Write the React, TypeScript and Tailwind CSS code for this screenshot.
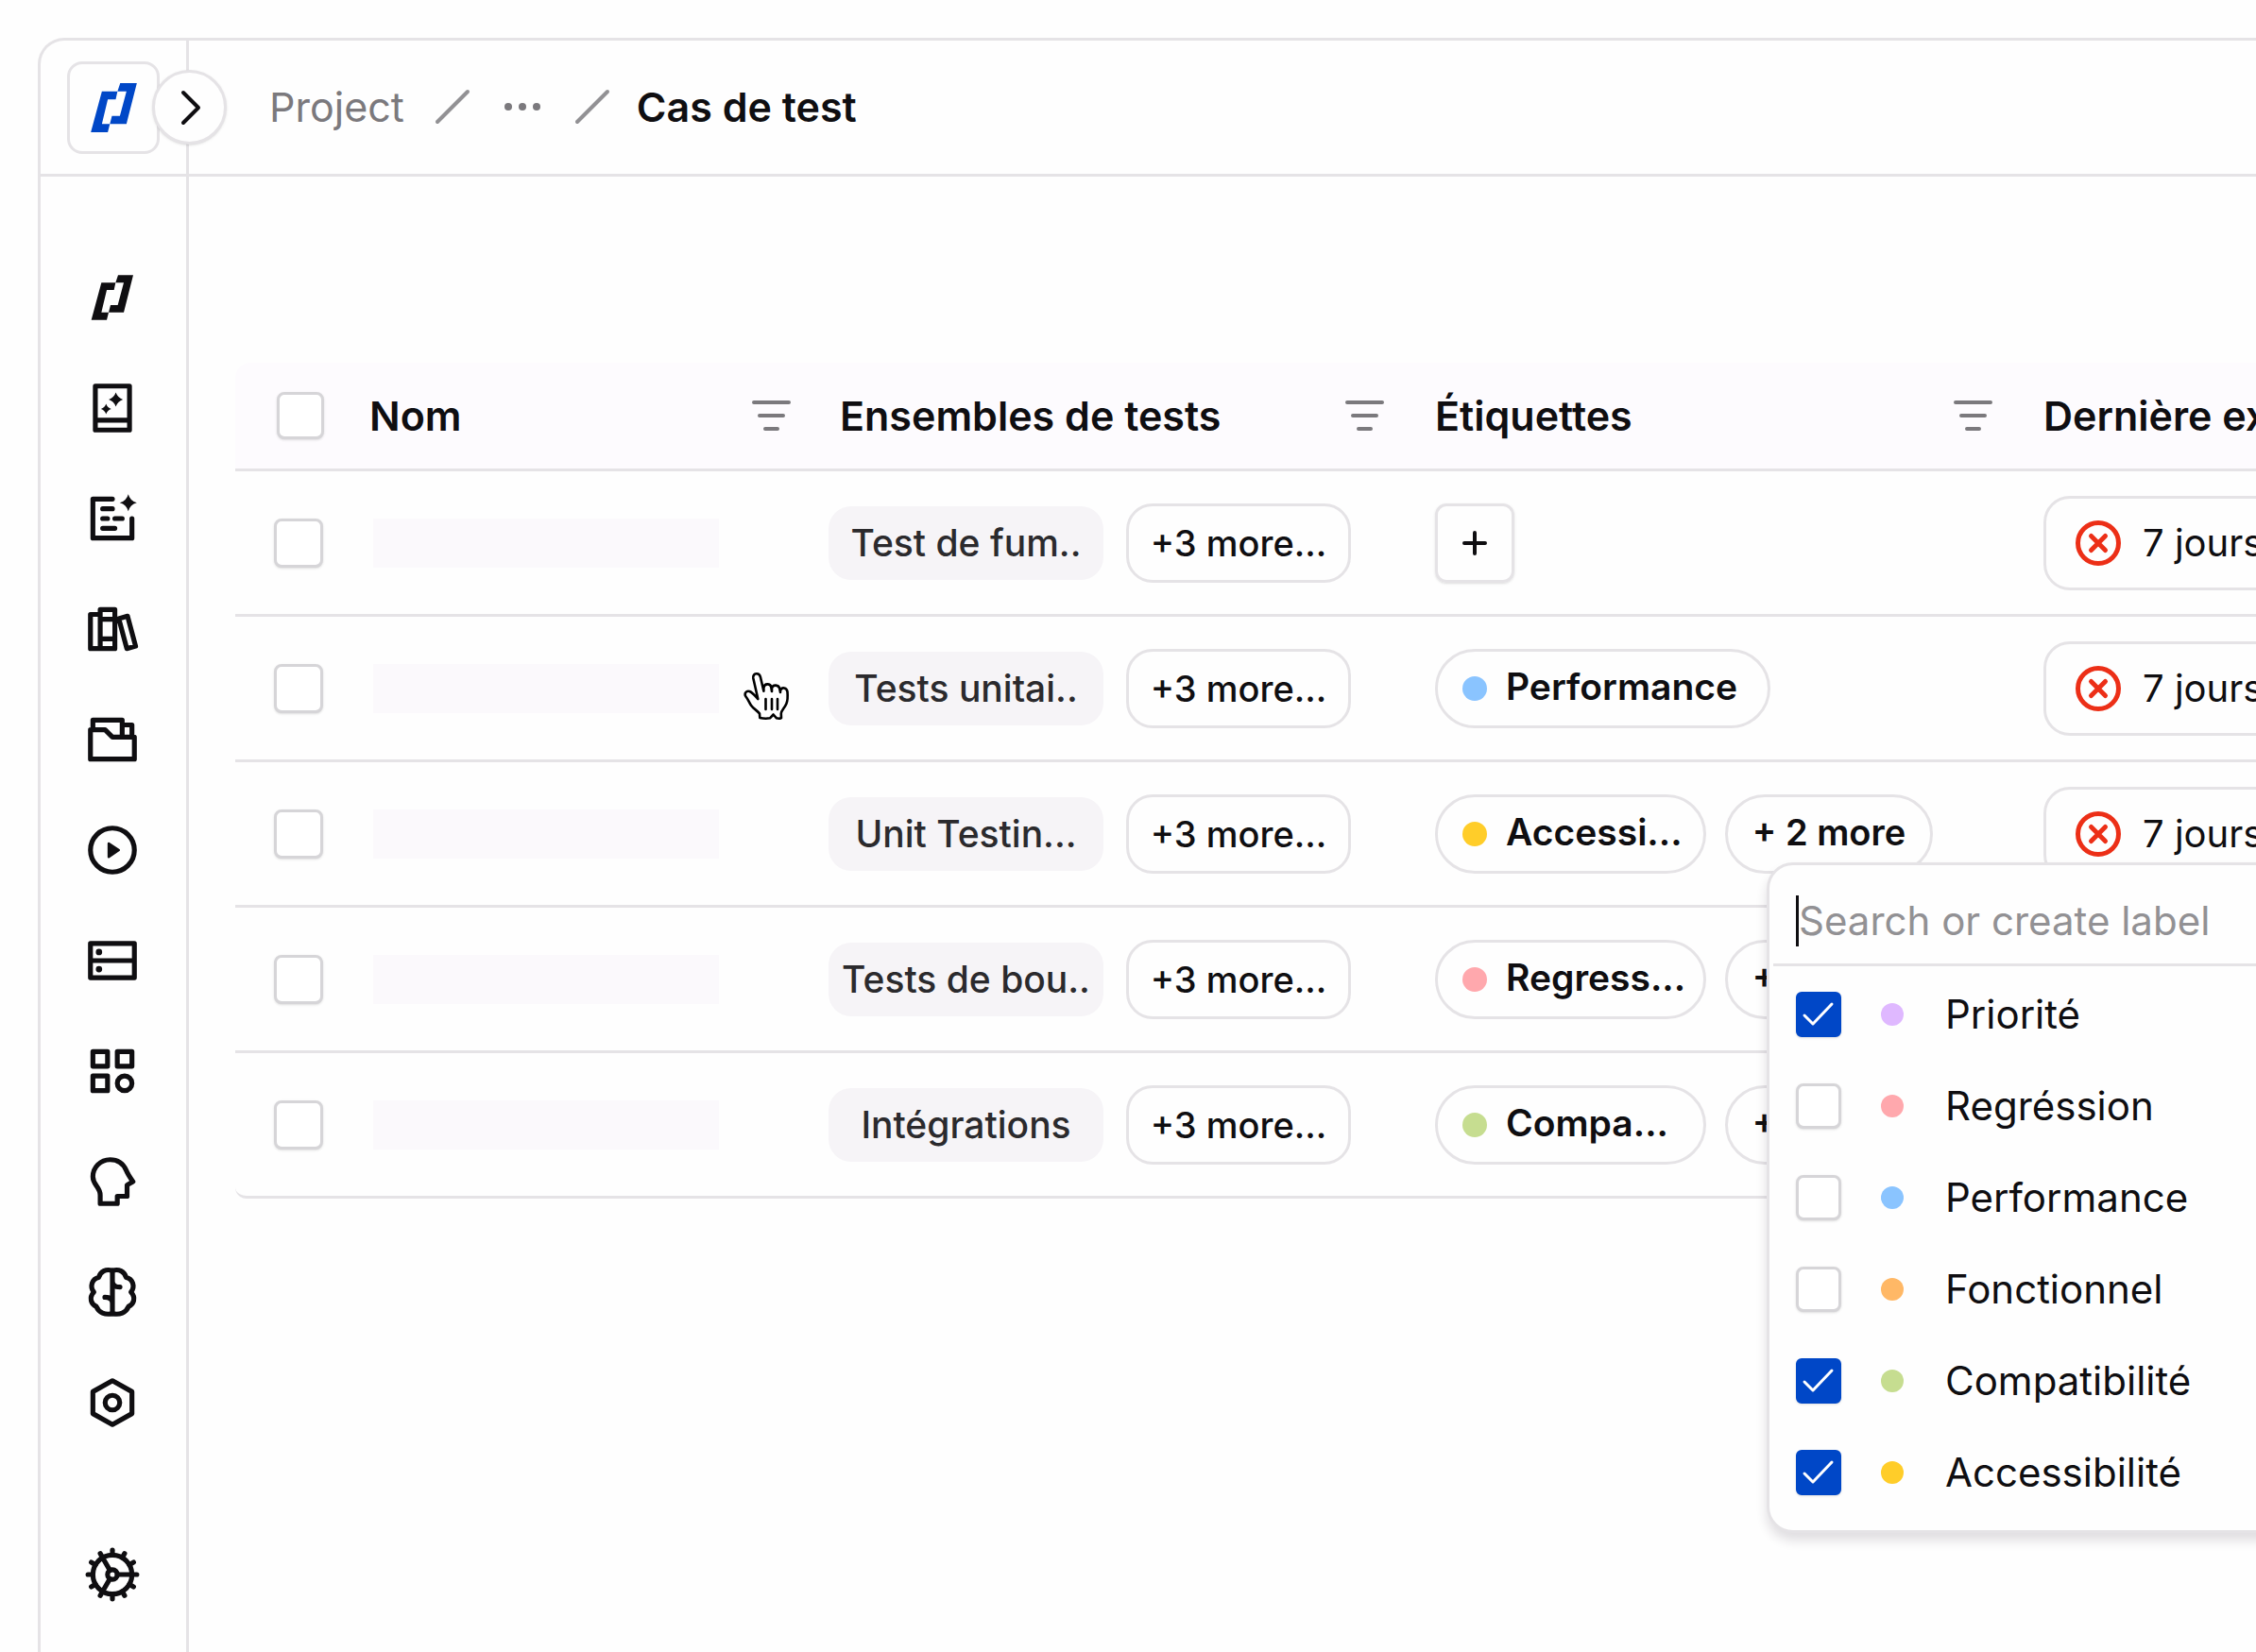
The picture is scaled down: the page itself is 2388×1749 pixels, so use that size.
import type { ReactNode } from "react";
import clsx from "clsx";

type Tag = { name: string; dot: string };

const tests: { set: string; tag?: Tag; more?: boolean; menu?: boolean; cursor?: boolean }[] = [
    { set: "Test de fum.." },
    { set: "Tests unitai..", tag: { name: "Performance", dot: "bg-[#8ac4ff]" }, cursor: true },
    { set: "Unit Testin...", tag: { name: "Accessi...", dot: "bg-[#ffcd29]" }, more: true, menu: true },
    { set: "Tests de bou..", tag: { name: "Regress...", dot: "bg-[#ffa8ad]" }, more: true },
    { set: "Intégrations", tag: { name: "Compa...", dot: "bg-[#c6dd90]" }, more: true },
];

const labels = [
    { name: "Priorité", dot: "bg-[#dfb8ff]", checked: true },
    { name: "Regréssion", dot: "bg-[#ffa8ad]", checked: false },
    { name: "Performance", dot: "bg-[#8ac4ff]", checked: false },
    { name: "Fonctionnel", dot: "bg-[#ffb866]", checked: false },
    { name: "Compatibilité", dot: "bg-[#c6dd90]", checked: true },
    { name: "Accessibilité", dot: "bg-[#ffcd29]", checked: true },
];

function BrandShape() {
    return (
        <g fill="currentColor">
            <path d="M145 122H190L185 145H162L145 216H168L162 240H113Z" />
            <path d="M198 98H246L216 216H168L174 193H197L216 122H190Z" />
        </g>
    );
}

function NavIcon({ children }: { children: ReactNode }) {
    return (
        <svg
            viewBox="0 0 24 24"
            className="size-[62px]"
            fill="none"
            stroke="currentColor"
            strokeWidth="2"
            strokeLinecap="round"
            strokeLinejoin="round"
            aria-hidden="true"
        >
            {children}
        </svg>
    );
}

const teeth = [0, 30, 60, 90, 120, 150, 180, 210, 240, 270, 300, 330];

const nav: { label: string; icon: ReactNode }[] = [
    {
        label: "Accueil",
        icon: (
            <svg viewBox="87 76 186 186" className="size-[62px]" aria-hidden="true">
                <BrandShape />
            </svg>
        ),
    },
    {
        label: "Cahier",
        icon: (
            <NavIcon>
                <path d="M5 3h14v18H5zM5 17h14" />
                <g fill="currentColor" stroke="none">
                    <path d="M13.4 5.6Q14.2 7.8 16.3 8.5Q14.2 9.2 13.4 11.4Q12.6 9.2 10.5 8.5Q12.6 7.8 13.4 5.6Z" />
                    <path d="M9.4 10.3Q10 11.9 11.5 12.4Q10 12.9 9.4 14.5Q8.8 12.9 7.3 12.4Q8.8 11.9 9.4 10.3Z" />
                </g>
            </NavIcon>
        ),
    },
    {
        label: "Exigences",
        icon: (
            <NavIcon>
                <path d="M12 4H4v16h16v-8M8 8h4M8 12h2M13 12h3M8 16h5" />
                <path
                    d="M18.5 2Q19.2 4.7 22 5.5Q19.2 6.3 18.5 9Q17.8 6.3 15 5.5Q17.8 4.7 18.5 2Z"
                    fill="currentColor"
                    stroke="none"
                />
            </NavIcon>
        ),
    },
    {
        label: "Bibliothèque",
        icon: (
            <NavIcon>
                <path d="M7 6H3v14h4M7 4h6v16H7zM7 8h6M7 16h6M14.6 7.7l3.6-1L21.5 19l-3.6 1z" />
            </NavIcon>
        ),
    },
    {
        label: "Dossiers",
        icon: (
            <NavIcon>
                <path d="M3 8h6l3 3h9v9H3zM4 8V4h12v7M16 6h4v5" />
            </NavIcon>
        ),
    },
    {
        label: "Exécutions",
        icon: (
            <NavIcon>
                <circle cx="12" cy="12" r="9" />
                <path d="M10.5 9.3L14.6 12L10.5 14.8Z" fill="currentColor" strokeWidth="1" />
            </NavIcon>
        ),
    },
    {
        label: "Environnements",
        icon: (
            <NavIcon>
                <path d="M3 5h18v14H3zM3 12h18" />
                <g fill="currentColor" stroke="none">
                    <circle cx="6.5" cy="8.5" r="1.3" />
                    <circle cx="6.5" cy="15.5" r="1.3" />
                </g>
            </NavIcon>
        ),
    },
    {
        label: "Modules",
        icon: (
            <NavIcon>
                <path d="M4 4h6v6H4zM14 4h6v6h-6zM4 14h6v6H4z" />
                <circle cx="17" cy="17" r="3" />
            </NavIcon>
        ),
    },
    {
        label: "Agents",
        icon: (
            <NavIcon>
                <path d="M7 21v-3.5c0-1.6-.8-2.7-1.5-3.7C4.6 12.6 4 11.5 4 10a7 7 0 0 1 7-7c3.1 0 5.5 1.7 6.6 4.3.6 1.5 1.5 2.9 2.8 4.7L18 13.4V18h-4v3z" />
            </NavIcon>
        ),
    },
    {
        label: "Intelligence",
        icon: (
            <NavIcon>
                <path d="M12 3.2V20.8M12 7.5c0 1.6 1 2.4 3.1 2.4M12 16.5c0-1.6-1-2.4-3.1-2.4" />
                <path d="M12 3.2C9.4 2.3 7 3.5 6.4 6C3.6 6.5 2.6 9.8 4.4 12C2.3 14.2 3.2 17 5.4 17.9C6.4 20.4 9 21.5 12 20.8" />
                <path d="M12 3.2C14.6 2.3 17 3.5 17.6 6C20.4 6.5 21.4 9.8 19.6 12C21.7 14.2 20.8 17 18.6 17.9C17.6 20.4 15 21.5 12 20.8" />
            </NavIcon>
        ),
    },
    {
        label: "Configuration",
        icon: (
            <NavIcon>
                <path d="M12 3l8 4.5v9L12 21l-8-4.5v-9z" />
                <circle cx="12" cy="12" r="3" />
            </NavIcon>
        ),
    },
];

function Checkbox({ id, label, checked = false, size = "size-[52px]" }: { id: string; label?: string; checked?: boolean; size?: string }) {
    return (
        <span className="inline-grid place-items-center align-middle">
            <input
                id={id}
                type="checkbox"
                defaultChecked={checked}
                aria-label={label}
                className={clsx(
                    "peer col-start-1 row-start-1 appearance-none rounded-lg border-3 border-[#d6d5d8] bg-white shadow-sm",
                    "checked:rounded-md checked:border-[#0047c7] checked:bg-[#0047c7]",
                    size
                )}
            />
            <svg
                viewBox="0 0 48 48"
                className="pointer-events-none invisible col-start-1 row-start-1 size-12 text-white peer-checked:visible"
                fill="none"
                stroke="currentColor"
                strokeWidth="3"
                strokeLinecap="round"
                strokeLinejoin="round"
                aria-hidden="true"
            >
                <path d="M9 25l9 9 20-21" />
            </svg>
        </span>
    );
}

function FilterButton({ label }: { label: string }) {
    return (
        <button type="button" aria-label={label} className="text-[#7b797d]">
            <svg viewBox="0 0 41 34" className="h-[34px] w-[41px]" fill="none" stroke="currentColor" strokeWidth="4" strokeLinecap="round" aria-hidden="true">
                <path d="M2 3h37M8 17h25M14 31h13" />
            </svg>
        </button>
    );
}

function HeadCell({ title, className }: { title: string; className: string }) {
    return (
        <th scope="col" className="border-b-3 border-[#e5e3e6] bg-[#fdfbfe] p-0 text-left">
            <div className={clsx("flex items-center justify-between", className)}>
                <span className="text-[43px] leading-[52px] font-semibold">{title}</span>
                <FilterButton label={`Filtrer ${title}`} />
            </div>
        </th>
    );
}

function LabelMenu() {
    return (
        <div className="absolute top-[72px] left-[44px] z-10 w-[640px] rounded-[28px] border-3 border-[#e5e3e6] bg-[#fefefe] pb-3 text-left text-[42px] leading-[52px] font-normal shadow-[0_8px_12px_rgba(40,30,50,0.14)]">
            <div className="ml-1 flex items-center border-b-3 border-[#e5e3e6] pt-8 pb-[18px] pl-6">
                <span className="h-[54px] w-[3px] bg-[#0f0e11]" />
                <input
                    type="text"
                    aria-label="Search or create label"
                    placeholder="Search or create label"
                    className="w-full bg-transparent outline-none placeholder:text-[#929194]"
                />
            </div>
            <ul className="pt-[3px]">
                {labels.map((item) => (
                    <li key={item.name}>
                        <label htmlFor={`label-${item.name}`} className="flex h-[97px] items-center pl-7">
                            <Checkbox id={`label-${item.name}`} checked={item.checked} size="size-12" />
                            <span className={clsx("mr-11 ml-[42px] size-6 rounded-full", item.dot)} />
                            {item.name}
                        </label>
                    </li>
                ))}
            </ul>
        </div>
    );
}

// Pointer shown over the hovered row
function HandCursor() {
    return (
        <svg
            viewBox="-2 -2 50 53"
            className="pointer-events-none absolute top-[57px] left-[409px] h-[53px] w-[50px]"
            fill="#fff"
            stroke="#000"
            strokeWidth="2.6"
            strokeLinecap="round"
            strokeLinejoin="round"
            aria-hidden="true"
        >
            <path d="M14.3 28L9.3 6C8.5 .2 15.8 -.6 17 5L20.4 19.7V16C21 11 27.5 11.4 28.3 15.5L29 20V16.5C30 12.3 36.5 12.8 37.2 17L38 21V19C39.5 15 45 15.8 45.5 20.5C46 26 46 29 44.4 33C42.6 37.5 39 40 38.8 43.5L39 48C37.5 48.8 35.5 48.8 34 48.3L30.6 44.5L27 48.3C23.5 49 19.5 48.7 16.3 48L16 43.5C14 40.5 10 39 7 34.7C4.5 31 4 28.5 1.3 25.2C-.5 22 2 18.8 5.5 20C9 21.5 11.3 24.8 14.3 28Z" />
            <path d="M22.5 28V39M29 28V39M35 28V39" />
        </svg>
    );
}

export default function App() {
    return (
        <div className="flex min-h-screen flex-col overflow-hidden bg-[#fefefe] pt-10 pl-10 font-['Inter','Liberation_Sans',sans-serif] text-[#0f0e11]">
            <div className="flex grow flex-col rounded-tl-[28px] border-t-3 border-l-3 border-[#e5e3e6]">
                {/* Top bar */}
                <header className="flex h-36 border-b-3 border-[#e5e3e6]">
                    <div className="relative flex w-[157px] shrink-0 items-center border-r-3 border-[#e5e3e6] pl-7">
                        <a href="#" aria-label="Accueil" className="grid size-[98px] place-items-center rounded-2xl border-3 border-[#e5e3e6] text-[#0047c7]">
                            <svg viewBox="113 98 133 142" className="h-[52px] w-[49px]" aria-hidden="true">
                                <BrandShape />
                            </svg>
                        </a>
                        <button
                            type="button"
                            aria-label="Déplier le menu"
                            className="absolute left-[118px] grid size-[79px] place-items-center rounded-full border-3 border-[#e5e3e6] bg-[#fefefe] shadow-sm"
                        >
                            <svg viewBox="0 0 24 40" className="h-10 w-6" fill="none" stroke="currentColor" strokeWidth="4" strokeLinecap="round" strokeLinejoin="round" aria-hidden="true">
                                <path d="M5 4l16 16L5 36" />
                            </svg>
                        </button>
                    </div>
                    <nav aria-label="Fil d'Ariane" className="flex items-center pb-[2px] pl-[85px] text-[43px] leading-[52px] text-[#7b797d]">
                        <a href="#">Project</a>
                        <svg viewBox="0 0 38 38" className="mx-8 size-[38px] text-[#929194]" stroke="currentColor" strokeWidth="4" strokeLinecap="round" aria-hidden="true">
                            <path d="M3 35L35 3" />
                        </svg>
                        <button type="button" aria-label="Afficher le chemin" className="ml-1">
                            <svg viewBox="0 0 38 8" className="h-2 w-[38px]" fill="currentColor" aria-hidden="true">
                                <circle cx="4" cy="4" r="4" />
                                <circle cx="19" cy="4" r="4" />
                                <circle cx="34" cy="4" r="4" />
                            </svg>
                        </button>
                        <svg viewBox="0 0 38 38" className="mr-7 ml-9 size-[38px] text-[#929194]" stroke="currentColor" strokeWidth="4" strokeLinecap="round" aria-hidden="true">
                            <path d="M3 35L35 3" />
                        </svg>
                        <span className="font-semibold text-[#0f0e11]">Cas de test</span>
                    </nav>
                </header>

                <div className="flex grow">
                    {/* Side navigation */}
                    <aside className="w-[157px] shrink-0 border-r-3 border-[#e5e3e6] pt-[97px]">
                        <nav aria-label="Navigation principale" className="flex flex-col items-center gap-[55px] pr-[2px]">
                            {nav.map((item) => (
                                <a key={item.label} href="#" aria-label={item.label}>
                                    {item.icon}
                                </a>
                            ))}
                        </nav>
                        <a href="#" aria-label="Paramètres" className="mt-[120px] flex justify-center pr-[2px]">
                            <NavIcon>
                                <circle cx="12" cy="12" r="8" />
                                <circle cx="12" cy="12" r="2" />
                                {teeth.map((angle) => (
                                    <path key={angle} d="M20 12h2" transform={`rotate(${angle} 12 12)`} />
                                ))}
                                <path d="M14 12h6M11 10.3L8 5.1M11 13.7L8 18.9" />
                            </NavIcon>
                        </a>
                    </aside>

                    {/* Test cases */}
                    <main className="min-w-0 grow pt-[197px] pl-[49px]">
                        <table className="w-full table-fixed border-separate border-spacing-0 whitespace-nowrap">
                            <colgroup>
                                <col className="w-32" />
                                <col className="w-[500px]" />
                                <col className="w-[642px]" />
                                <col className="w-[644px]" />
                                <col />
                            </colgroup>
                            <thead>
                                <tr className="h-[115px]">
                                    <th scope="col" className="rounded-tl-2xl border-b-3 border-[#e5e3e6] bg-[#fdfbfe] p-0 pl-11 text-left">
                                        <Checkbox id="all" label="Tout sélectionner" size="size-[50px]" />
                                    </th>
                                    <HeadCell title="Nom" className="pr-10 pl-[14px]" />
                                    <HeadCell title="Ensembles de tests" className="pr-[54px] pl-3" />
                                    <HeadCell title="Étiquettes" className="pr-[54px]" />
                                    <HeadCell title="Dernière exécution" className="w-[520px]" />
                                </tr>
                            </thead>
                            <tbody>
                                {tests.map((test, i) => (
                                    <tr key={test.set} className="group h-[154px]">
                                        <td className="border-b-3 border-[#e5e3e6] p-0 pl-[41px] group-last:rounded-bl-xl">
                                            <Checkbox id={`test-${i}`} label={`Sélectionner ${test.set}`} />
                                        </td>
                                        <td className="relative border-b-3 border-[#e5e3e6] p-0 pl-[18px]">
                                            <div className="h-[52px] w-[366px] bg-[#fbf9fc]" />
                                            {test.cursor && <HandCursor />}
                                        </td>
                                        <td className="border-b-3 border-[#e5e3e6] p-0 font-medium">
                                            <div className="flex items-center gap-6">
                                                <span className="flex h-[78px] w-[291px] items-center justify-center rounded-3xl bg-[#f6f4f7] text-[39px] leading-[50px] text-[#2b2a2d]">
                                                    {test.set}
                                                </span>
                                                <button type="button" className="h-[84px] w-[238px] rounded-[28px] border-3 border-[#e5e3e6] text-[38px] leading-[50px]">
                                                    +3 more...
                                                </button>
                                            </div>
                                        </td>
                                        <td className="border-b-3 border-[#e5e3e6] p-0 font-semibold">
                                            <div className="flex items-center gap-5">
                                                {test.tag ? (
                                                    <span
                                                        className={clsx(
                                                            "flex h-[84px] items-center gap-5 rounded-full border-3 border-[#e5e3e6] pl-[26px] text-[39px] leading-[50px]",
                                                            test.more ? "w-[287px]" : "w-[355px]"
                                                        )}
                                                    >
                                                        <span className={clsx("size-[26px] shrink-0 rounded-full", test.tag.dot)} />
                                                        <span className="pb-1">{test.tag.name}</span>
                                                    </span>
                                                ) : (
                                                    <button
                                                        type="button"
                                                        aria-label="Ajouter une étiquette"
                                                        className="grid size-[84px] place-items-center rounded-xl border-3 border-[#e5e3e6] shadow-sm"
                                                    >
                                                        <svg viewBox="0 0 28 28" className="size-7" stroke="currentColor" strokeWidth="4" strokeLinecap="round" aria-hidden="true">
                                                            <path d="M14 3v22M3 14h22" />
                                                        </svg>
                                                    </button>
                                                )}
                                                {test.more && (
                                                    <div className="relative">
                                                        <button
                                                            type="button"
                                                            className="h-[84px] w-[220px] rounded-full border-3 border-[#e5e3e6] pb-1 text-[38px] leading-[50px] font-semibold"
                                                        >
                                                            + 2 more
                                                        </button>
                                                        {test.menu && <LabelMenu />}
                                                    </div>
                                                )}
                                            </div>
                                        </td>
                                        <td className="border-b-3 border-[#e5e3e6] p-0">
                                            <div className="flex h-[100px] w-[420px] items-center gap-[22px] rounded-[28px] border-3 border-[#e5e3e6] pl-[30px] text-[40px] leading-[50px]">
                                                <svg viewBox="0 0 50 50" className="size-[50px]  text-[#ec2f17]" fill="none" stroke="currentColor" strokeWidth="5" strokeLinecap="round" aria-hidden="true">
                                                    <circle cx="25" cy="25" r="21.5" />
                                                    <path d="M17.5 17.5l15 15M32.5 17.5l-15 15" />
                                                </svg>
                                                7 jours
                                            </div>
                                        </td>
                                    </tr>
                                ))}
                            </tbody>
                        </table>
                    </main>
                </div>
            </div>
        </div>
    );
}
